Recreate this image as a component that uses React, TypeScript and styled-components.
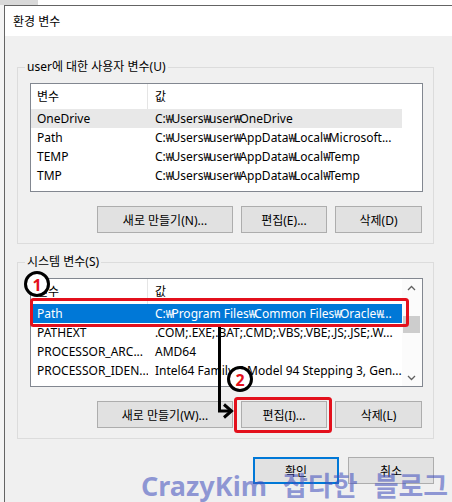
import React from "react";
import styled, { createGlobalStyle } from "styled-components";

const Global = createGlobalStyle`
  html, body { margin: 0; padding: 0; background: #fff; overflow: hidden; }
  body { font-family: "Noto Sans", "Noto Sans CJK KR", sans-serif; color: #000; }
  * { box-sizing: border-box; }
`;

const Page = styled.div`
  position: relative;
  width: 452px;
  height: 502px;
  overflow: hidden;
  background: #fff;
`;

const TopStrip = styled.div`
  height: 5px;
  display: flex;
`;

const TopPatch = styled.div`
  width: 38px;
  background: #d9d9d9;
`;

const Desk = styled.div`
  display: flex;
  height: 497px;
`;

const Gutter = styled.div`
  width: 4px;
  flex: none;
  background: #f4f4f4;
`;

const Window = styled.div`
  flex: 1;
  border-top: 1px solid #646464;
  border-left: 1px solid #646464;
  display: flex;
  flex-direction: column;
  background: #f0f0f0;
`;

const TitleBar = styled.div`
  height: 30px;
  flex: none;
  background: #fff;
  display: flex;
  align-items: center;
  padding-left: 8px;
  font-size: 12px;
`;

const Body = styled.div`
  flex: 1;
  display: flex;
  flex-direction: column;
  align-items: flex-start;
  padding: 23px 0 0 12px;
`;

const Group = styled.fieldset`
  width: 417px;
  margin: 0;
  min-width: 0;
  border: 1px solid #dcdcdc;
  padding: 8px 10px 10px 12px;
  & + & {
    margin-top: 10px;
  }
`;

const Legend = styled.legend`
  margin-left: -5px;
  padding: 0 2px;
  font-size: 12px;
  line-height: 16px;
`;

const ListBox = styled.div`
  height: 109px;
  border: 1px solid #828790;
  background: #fff;
  display: flex;
  overflow: hidden;
`;

const Columns = styled.div`
  width: 371px;
  flex: none;
  display: flex;
  flex-direction: column;
`;

const HeaderRow = styled.div`
  display: grid;
  grid-template-columns: 117px 254px;
  height: 25px;
`;

const HeaderCell = styled.div<{ $pad: number; $divider?: boolean }>`
  padding-left: ${(p) => p.$pad}px;
  font-size: 12px;
  line-height: 25px;
  border-right: ${(p) => (p.$divider ? "1px solid #e5e5e5" : "none")};
`;

const Row = styled.div<{ $state?: "focus" | "inactive" }>`
  display: grid;
  grid-template-columns: 117px 254px;
  height: 19px;
  background: ${(p) =>
    p.$state === "focus" ? "#0078d7" : p.$state === "inactive" ? "#e8e8e8" : "transparent"};
  color: ${(p) => (p.$state === "focus" ? "#fff" : "#000")};
`;

const Cell = styled.div<{ $pad: number }>`
  padding-left: ${(p) => p.$pad}px;
  font-size: 12px;
  line-height: 19px;
  white-space: nowrap;
  overflow: hidden;
`;

const Won = styled.span`
  font-size: 11px;
  letter-spacing: -1.8px;
`;

const ScrollBar = styled.div`
  width: 20px;
  flex: none;
  display: flex;
  flex-direction: column;
  background: #fbfbfb;
`;

const ScrollArrow = styled.div`
  height: 17px;
  display: flex;
  align-items: center;
  justify-content: center;
  padding-right: 2px;
`;

const Track = styled.div`
  flex: 1;
  padding-top: 20px;
`;

const Thumb = styled.div`
  width: 17px;
  height: 17px;
  margin-left: 1px;
  background: #cdcdcd;
`;

const ButtonRow = styled.div`
  display: flex;
  justify-content: flex-end;
  gap: 8px;
  margin-top: 14px;
  padding-right: 1px;
`;

const Button = styled.button<{ $w: number; $default?: boolean }>`
  width: ${(p) => p.$w}px;
  height: 27px;
  padding: 0;
  background: #e1e1e1;
  border: ${(p) => (p.$default ? "2px solid #0078d7" : "1px solid #adadad")};
  font-family: inherit;
  font-size: 12px;
  color: #000;
  display: flex;
  align-items: center;
  justify-content: center;
`;

const BottomRow = styled.div`
  width: 417px;
  display: flex;
  justify-content: flex-end;
  gap: 9px;
  margin-top: 18px;
`;

const Overlay = styled.svg`
  position: absolute;
  left: 0;
  top: 0;
  pointer-events: none;
`;

const Watermark = styled.div`
  position: absolute;
  left: 141px;
  top: 472px;
  font-family: "Noto Sans", "Noto Sans CJK KR", sans-serif;
  font-weight: 700;
  font-size: 27px;
  line-height: 27px;
  color: rgba(66, 80, 190, 0.56);
  white-space: nowrap;
  word-spacing: 9px;
  pointer-events: none;
`;

type Var = { name: string; value: string; state?: "focus" | "inactive" };

const userVars: Var[] = [
  { name: "OneDrive", value: "C:₩Users₩user₩OneDrive", state: "inactive" },
  { name: "Path", value: "C:₩Users₩user₩AppData₩Local₩Microsoft..." },
  { name: "TEMP", value: "C:₩Users₩user₩AppData₩Local₩Temp" },
  { name: "TMP", value: "C:₩Users₩user₩AppData₩Local₩Temp" },
];

const systemVars: Var[] = [
  { name: "Path", value: "C:₩Program Files₩Common Files₩Oracle₩...", state: "focus" },
  { name: "PATHEXT", value: ".COM;.EXE;.BAT;.CMD;.VBS;.VBE;.JS;.JSE;.W..." },
  { name: "PROCESSOR_ARC...", value: "AMD64" },
  { name: "PROCESSOR_IDEN...", value: "Intel64 Family 6 Model 94 Stepping 3, Gen..." },
];

const PathText = ({ text }: { text: string }) => {
  const parts = text.split("₩");
  return (
    <>
      {parts.map((p, i) => (
        <React.Fragment key={i}>
          {i > 0 && <Won>₩</Won>}
          {p}
        </React.Fragment>
      ))}
    </>
  );
};

const Chevron = ({ up }: { up?: boolean }) => (
  <svg width="9" height="6" viewBox="0 0 9 6">
    <polyline
      points={up ? "1,5 4.5,1.5 8,5" : "1,1 4.5,4.5 8,1"}
      fill="none"
      stroke="#606060"
      strokeWidth="1.3"
    />
  </svg>
);

const VarList = ({ vars, scroll }: { vars: Var[]; scroll?: boolean }) => (
  <ListBox>
    <Columns>
      <HeaderRow>
        <HeaderCell $pad={6} $divider>
          변수
        </HeaderCell>
        <HeaderCell $pad={7}>값</HeaderCell>
      </HeaderRow>
      {vars.map((v) => (
        <Row key={v.name} $state={v.state}>
          <Cell $pad={6}>{v.name}</Cell>
          <Cell $pad={7}>
            <PathText text={v.value} />
          </Cell>
        </Row>
      ))}
    </Columns>
    {scroll && (
      <ScrollBar>
        <ScrollArrow>
          <Chevron up />
        </ScrollArrow>
        <Track>
          <Thumb />
        </Track>
        <ScrollArrow>
          <Chevron />
        </ScrollArrow>
      </ScrollBar>
    )}
  </ListBox>
);

const Badge = ({ cx, cy, n }: { cx: number; cy: number; n: string }) => (
  <g>
    <circle cx={cx} cy={cy} r={11.5} fill="#fff" stroke="#000" strokeWidth={3} />
    <text
      x={cx}
      y={cy + 1}
      textAnchor="middle"
      dominantBaseline="central"
      fill="#e3101c"
      fontFamily="Noto Sans, sans-serif"
      fontWeight={700}
      fontSize={16}
    >
      {n}
    </text>
  </g>
);

export default function App() {
  return (
    <Page>
      <Global />
      <TopStrip>
        <TopPatch />
      </TopStrip>
      <Desk>
        <Gutter />
        <Window>
          <TitleBar>환경 변수</TitleBar>
          <Body>
            <Group>
              <Legend>user에 대한 사용자 변수(U)</Legend>
              <VarList vars={userVars} />
              <ButtonRow>
                <Button $w={136}>새로 만들기(N)...</Button>
                <Button $w={86}>편집(E)...</Button>
                <Button $w={87}>삭제(D)</Button>
              </ButtonRow>
            </Group>
            <Group>
              <Legend>시스템 변수(S)</Legend>
              <VarList vars={systemVars} scroll />
              <ButtonRow>
                <Button $w={136}>새로 만들기(W)...</Button>
                <Button $w={86}>편집(I)...</Button>
                <Button $w={87}>삭제(L)</Button>
              </ButtonRow>
            </Group>
            <BottomRow>
              <Button $w={86} $default>
                확인
              </Button>
              <Button $w={86}>취소</Button>
            </BottomRow>
          </Body>
        </Window>
      </Desk>

      <Overlay width={452} height={502} viewBox="0 0 452 502">
        <rect x={31.5} y={299.5} width={376} height={26} rx={2} fill="none" stroke="#e3101c" strokeWidth={3} />
        <rect x={235.5} y={398.5} width={95} height={33} rx={2} fill="none" stroke="#e3101c" strokeWidth={3} />
        <polyline points="219.5,327 219.5,411 231,411" fill="none" stroke="#000" strokeWidth={3} />
        <polyline points="224,404.5 231.5,411 224,417.5" fill="none" stroke="#000" strokeWidth={3} />
        <Badge cx={37} cy={284} n="1" />
        <Badge cx={240} cy={379} n="2" />
      </Overlay>

      <Watermark>CrazyKim 잡다한 블로그</Watermark>
    </Page>
  );
}
